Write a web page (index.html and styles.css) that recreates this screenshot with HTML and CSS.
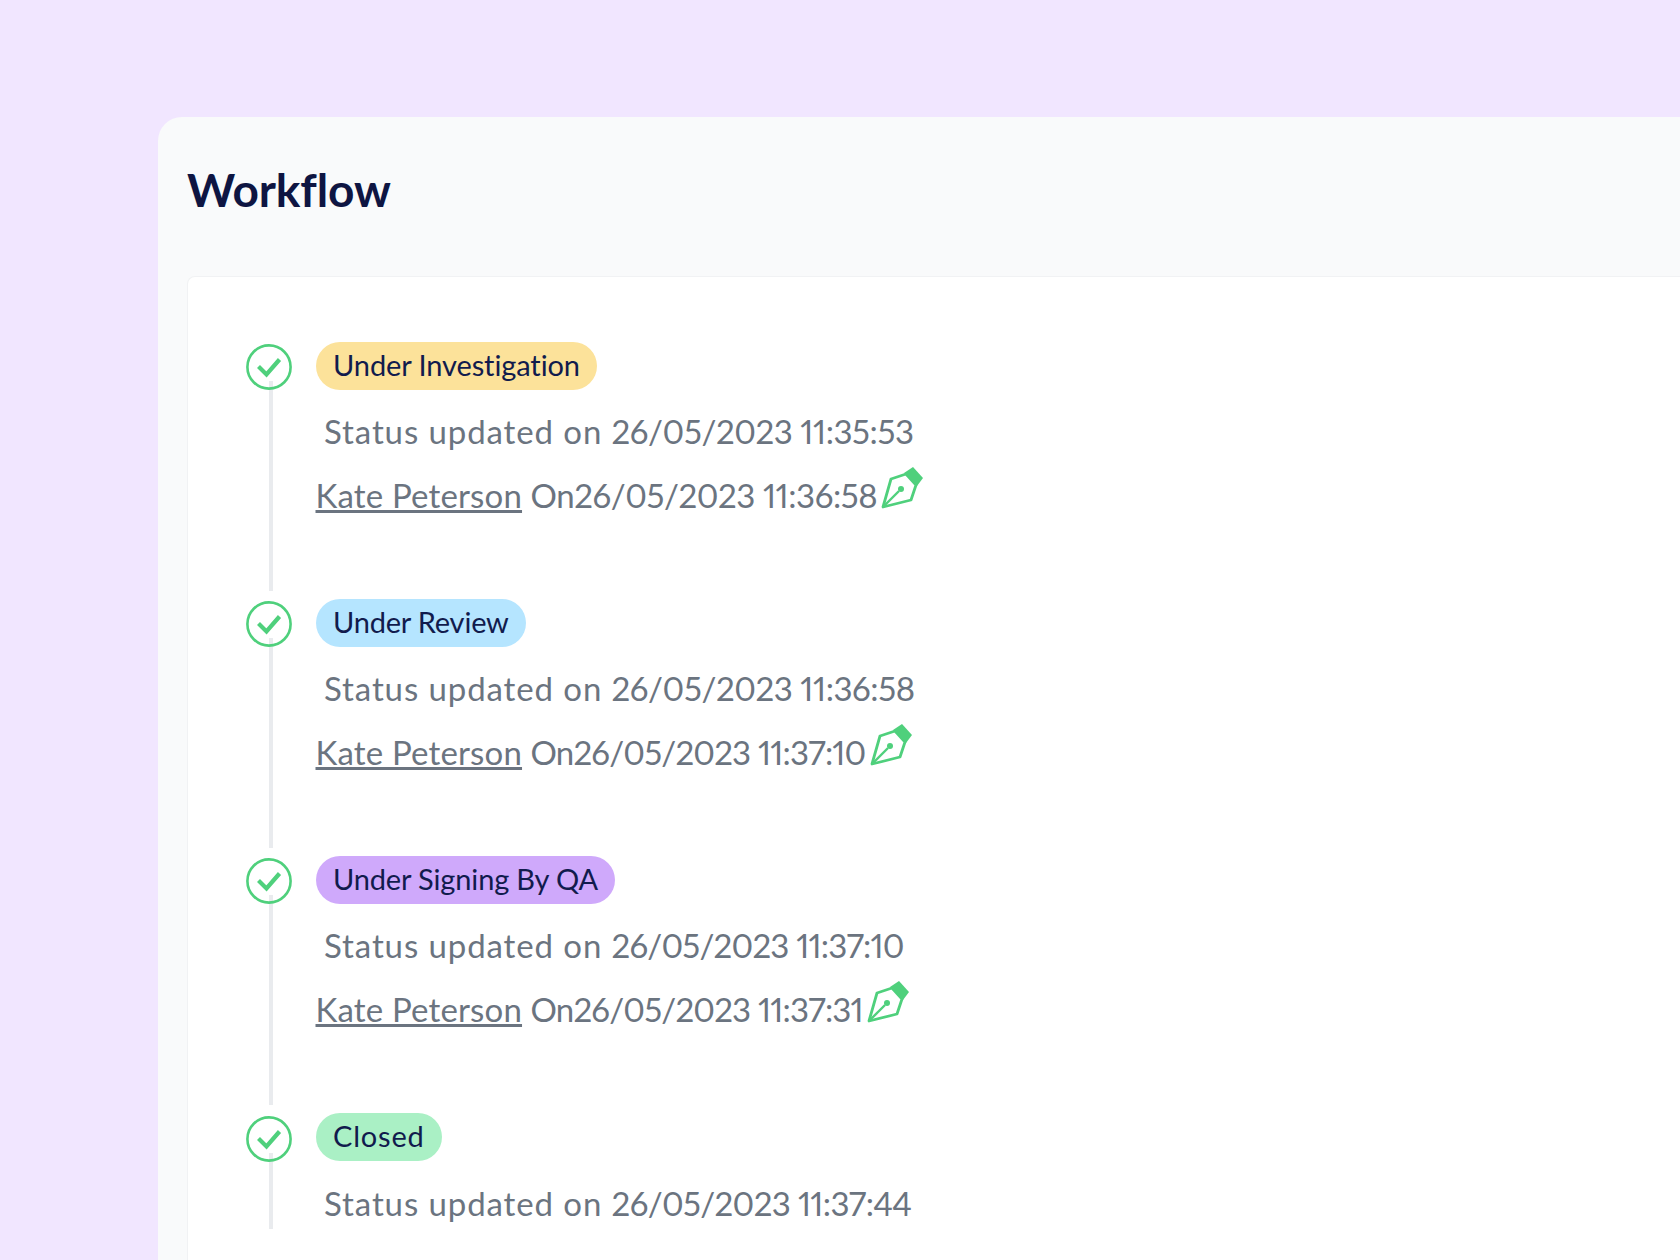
FILE: index.html
```html
<!DOCTYPE html>
<html lang="en">
<head>
<meta charset="utf-8">
<title>Workflow</title>
<link rel="stylesheet" href="styles.css">
</head>
<body>
<svg class="defs" width="0" height="0" aria-hidden="true">
  <symbol id="check" viewBox="0 0 46 46">
    <circle cx="23" cy="23" r="21.6" fill="none" stroke="#4fd07c" stroke-width="2.6"/>
    <path d="M12.5 22.5l8 8L33.5 15.5" fill="none" stroke="#4fd07c" stroke-width="4.2"/>
  </symbol>
  <symbol id="pen" viewBox="0 0 42 42">
    <path d="M2 40L10 12 25 7 35 18 30 33Z" fill="none" stroke="#4fd07c" stroke-width="2.8" stroke-linejoin="round"/>
    <path d="M2 40L18 24" fill="none" stroke="#4fd07c" stroke-width="2.4"/>
    <circle cx="20" cy="22" r="3" fill="#4fd07c"/>
    <path d="M23 6l9-6 10 11-6 8Z" fill="#4fd07c"/>
  </symbol>
</svg>
<main class="card">
  <h1 class="title">Workflow</h1>
  <section class="panel">
    <article class="item">
      <div class="rail"><svg class="check"><use href="#check"/></svg><span class="line"></span></div>
      <div class="body">
        <span class="badge badge-yellow">Under Investigation</span>
        <p class="status"><span class="label">Status updated on </span><span class="stamp">26/05/2023 11:35:53</span></p>
        <p class="signed"><a class="name" href="#">Kate Peterson</a> <span class="stamp">On26/05/2023 11:36:58</span><svg class="pen"><use href="#pen"/></svg></p>
      </div>
    </article>
    <article class="item">
      <div class="rail"><svg class="check"><use href="#check"/></svg><span class="line"></span></div>
      <div class="body">
        <span class="badge badge-blue">Under Review</span>
        <p class="status"><span class="label">Status updated on </span><span class="stamp">26/05/2023 11:36:58</span></p>
        <p class="signed"><a class="name" href="#">Kate Peterson</a> <span class="stamp stamp-tight">On26/05/2023 11:37:10</span><svg class="pen"><use href="#pen"/></svg></p>
      </div>
    </article>
    <article class="item">
      <div class="rail"><svg class="check"><use href="#check"/></svg><span class="line"></span></div>
      <div class="body">
        <span class="badge badge-purple">Under Signing By QA</span>
        <p class="status"><span class="label">Status updated on </span><span class="stamp stamp-tight">26/05/2023 11:37:10</span></p>
        <p class="signed"><a class="name" href="#">Kate Peterson</a> <span class="stamp stamp-tight">On26/05/2023 11:37:31</span><svg class="pen"><use href="#pen"/></svg></p>
      </div>
    </article>
    <article class="item item-last">
      <div class="rail"><svg class="check"><use href="#check"/></svg><span class="line line-last"></span></div>
      <div class="body">
        <span class="badge badge-green">Closed</span>
        <p class="status"><span class="label">Status updated on </span><span class="stamp stamp-snug">26/05/2023 11:37:44</span></p>
      </div>
    </article>
  </section>
</main>
</body>
</html>
```
FILE: styles.css
```css
html, body { margin: 0; height: 1260px; overflow: hidden; }
body {
  background: #f1e6ff;
  padding: 117px 0 0 158px;
  box-sizing: border-box;
  font-family: Lato, "Liberation Sans", sans-serif;
  font-variant-numeric: proportional-nums;
  font-variant-ligatures: none;
}
.defs { position: absolute; }
.card {
  background: #f9fafb;
  border-top-left-radius: 24px;
  padding: 0 0 0 29px;
  height: 1143px;
  overflow: hidden;
}
.title {
  margin: 0;
  padding-top: 45px;
  height: 159px;
  box-sizing: border-box;
  font-size: 46px;
  line-height: 56px;
  font-weight: 700;
  letter-spacing: -0.1px;
  color: #0e1542;
}
.panel {
  background: #fff;
  border: 1px solid #f1f2f4;
  border-right: 0;
  border-bottom: 0;
  border-top-left-radius: 8px;
  padding: 65px 0 0 58px;
  height: 984px;
  box-sizing: border-box;
}
.item { display: flex; height: 257px; }
.rail { width: 69.5px; flex: none; padding-top: 2px; }
.item-last .rail { padding-top: 3px; }
.check { display: block; width: 46px; height: 46px; }
.line {
  display: block;
  width: 4px;
  height: 210px;
  margin: -9px 0 0 23px;
  background: #e9ebee;
}
.line-last { height: 76px; }
.body { min-width: 0; }
.badge {
  display: inline-block;
  height: 48px;
  line-height: 46px;
  padding: 0 17.5px;
  border-radius: 24px;
  font-size: 29px;
  letter-spacing: -0.2px;
  color: #111b4d;
}
.badge-yellow { background: #fce29a; letter-spacing: -0.1px; }
.badge-blue { background: #b5e5ff; }
.badge-purple { background: #cfa9fb; letter-spacing: -0.15px; }
.badge-green { background: #aaf0c5; letter-spacing: 0.8px; }
.status {
  margin: 18px 0 0 8.5px;
  font-size: 33px;
  line-height: 46px;
  color: #6b7480;
  white-space: nowrap;
}
.item-last .status { margin-top: 19px; }
.label { letter-spacing: 0.9px; }
.stamp { letter-spacing: -0.42px; }
.stamp-tight { letter-spacing: -0.8px; }
.stamp-snug { letter-spacing: -0.64px; }
.signed {
  margin: 12.5px 0 0;
  font-size: 33px;
  line-height: 46px;
  color: #6b7480;
  white-space: nowrap;
}
.name { color: #6b7480; text-decoration: underline; letter-spacing: 0.17px; }
.pen { width: 42px; height: 42px; margin-left: 4px; vertical-align: -1px; }
```
